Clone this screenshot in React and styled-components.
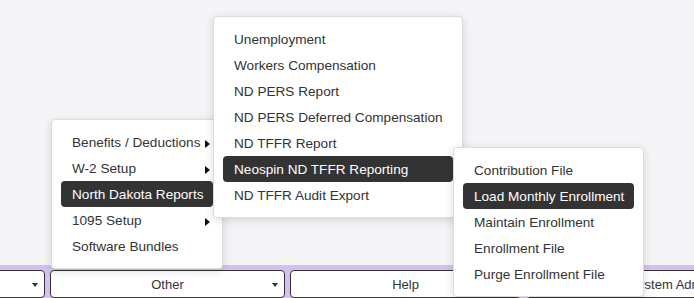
import React from "react";
import styled, { createGlobalStyle } from "styled-components";

const GlobalStyle = createGlobalStyle`
  html, body {
    margin: 0;
    padding: 0;
    background: #f5f4f7;
  }
  body {
    font-family: "Liberation Sans", Arial, sans-serif;
    color: #333;
  }
`;

const Page = styled.div`
  position: relative;
  width: 694px;
  height: 298px;
  overflow: hidden;
  display: flex;
  flex-direction: column;
`;

const Bar = styled.div`
  margin-top: auto;
  height: 33px;
  padding-top: 5px;
  box-sizing: border-box;
  background: #d5c0f1;
  overflow: hidden;
`;

const Track = styled.div`
  display: flex;
  gap: 5px;
  margin-left: -190px;
  height: 100%;
`;

const NavButton = styled.div`
  position: relative;
  flex: 0 0 ${(p) => p.$w}px;
  height: 28px;
  box-sizing: border-box;
  background: #fff;
  border: 1px solid #333;
  border-radius: 4px;
  font-size: 13px;
  line-height: 27px;
  text-align: center;
  white-space: nowrap;
  overflow: hidden;
  color: #333;
`;

const Caret = styled.span`
  position: absolute;
  right: 6px;
  top: 12px;
  width: 0;
  height: 0;
  border-left: 3.5px solid transparent;
  border-right: 3.5px solid transparent;
  border-top: 4px solid #333;
`;

const Panel = styled.div`
  position: absolute;
  left: ${(p) => p.$x}px;
  top: ${(p) => p.$y}px;
  width: ${(p) => p.$w}px;
  box-sizing: border-box;
  padding: 9px;
  background: #fff;
  border: 1px solid #dcdcdc;
  border-radius: 4px;
  box-shadow: 0 2px 10px rgba(0, 0, 0, 0.14);
  display: flex;
  flex-direction: column;
`;

const Item = styled.div`
  position: relative;
  height: 26px;
  line-height: 28px;
  padding-left: 11px;
  border-radius: 4px;
  font-size: 13.6px;
  white-space: nowrap;
  color: ${(p) => (p.$active ? "#fff" : "#333")};
  background: ${(p) => (p.$active ? "#333" : "transparent")};
`;

const SubArrow = styled.span`
  position: absolute;
  right: 3px;
  top: 11px;
  width: 0;
  height: 0;
  border-top: 4px solid transparent;
  border-bottom: 4px solid transparent;
  border-left: 5px solid #111;
`;

const menus = [
  {
    x: 51,
    y: 119,
    w: 172,
    items: [
      ["Benefits / Deductions", true],
      ["W-2 Setup", true],
      ["North Dakota Reports", false, true],
      ["1095 Setup", true],
      ["Software Bundles"],
    ],
  },
  {
    x: 213,
    y: 16,
    w: 250,
    items: [
      ["Unemployment"],
      ["Workers Compensation"],
      ["ND PERS Report"],
      ["ND PERS Deferred Compensation"],
      ["ND TFFR Report"],
      ["Neospin ND TFFR Reporting", false, true],
      ["ND TFFR Audit Export"],
    ],
  },
  {
    x: 453,
    y: 147,
    w: 191,
    items: [
      ["Contribution File"],
      ["Load Monthly Enrollment", false, true],
      ["Maintain Enrollment"],
      ["Enrollment File"],
      ["Purge Enrollment File"],
    ],
  },
];

const App = () => (
  <>
    <GlobalStyle />
    <Page>
      <Bar>
        <Track>
          <NavButton $w={235}>
            <Caret />
          </NavButton>
          <NavButton $w={235}>
            Other
            <Caret />
          </NavButton>
          <NavButton $w={231}>Help</NavButton>
          <NavButton $w={290}>System Admin</NavButton>
        </Track>
      </Bar>
      {menus.map((m, i) => (
        <Panel key={i} $x={m.x} $y={m.y} $w={m.w}>
          {m.items.map(([label, sub, active]) => (
            <Item key={label} $active={active}>
              {label}
              {sub && <SubArrow />}
            </Item>
          ))}
        </Panel>
      ))}
    </Page>
  </>
);

export default App;
